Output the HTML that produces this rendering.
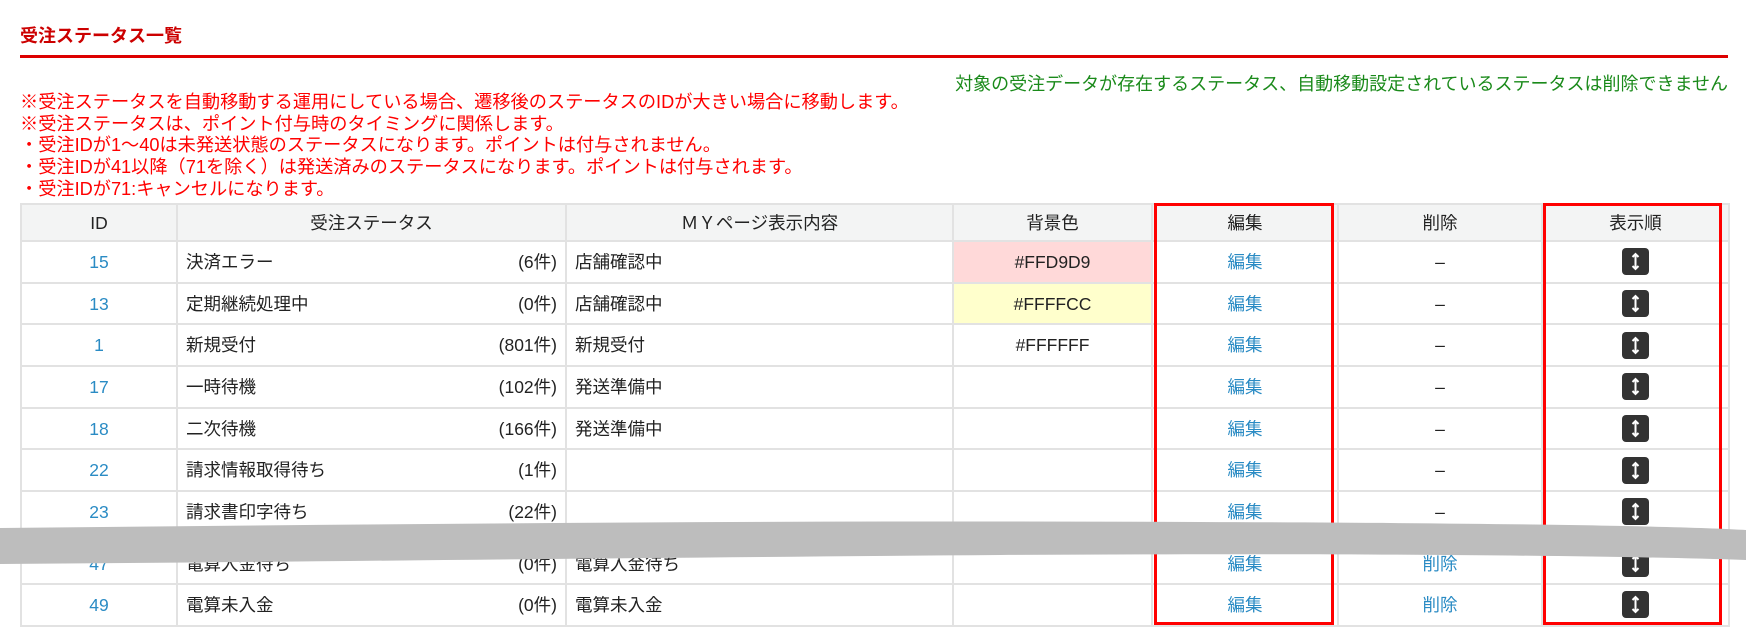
<!DOCTYPE html>
<html><head><meta charset="utf-8"><style>
body{margin:0;width:1746px;height:634px;background:#fff;position:relative;overflow:hidden;font-family:"Liberation Sans","Noto Sans CJK JP",sans-serif;}
.t{position:absolute;left:20px;top:22px;font-size:18px;font-weight:bold;color:#c00;}
.line{position:absolute;left:20px;top:55px;width:1708px;height:3px;background:#d00;}
.g{position:absolute;right:18px;top:70px;font-size:18px;color:#1a8a1a;}
.notes{position:absolute;left:20px;top:92px;font-size:18.2px;line-height:21.7px;color:#f00;}
table{position:absolute;left:20px;border-collapse:collapse;table-layout:fixed;font-size:17.5px;color:#222;}
td,th{border:2px solid #e2e2e2;height:39.7px;padding:0 8px;white-space:nowrap;vertical-align:middle;line-height:22px;box-sizing:border-box;}
th{background:#f3f4f4;font-weight:normal;height:36px;}
.c{text-align:center;}
a{color:#2a8bc4;}
.r{float:right;}
.ic{display:inline-block;width:27px;height:27px;background:#333;border-radius:4px;vertical-align:middle;}
.ic svg{display:block;}
.box{position:absolute;border:3px solid #f00;top:203px;height:416px;}
</style></head><body>
<div class="t">受注ステータス一覧</div>
<div class="line"></div>
<div class="g">対象の受注データが存在するステータス、自動移動設定されているステータスは削除できません</div>
<div class="notes">※受注ステータスを自動移動する運用にしている場合、遷移後のステータスのIDが大きい場合に移動します。<br>※受注ステータスは、ポイント付与時のタイミングに関係します。<br>・受注IDが1～40は未発送状態のステータスになります。ポイントは付与されません。<br>・受注IDが41以降（71を除く）は発送済みのステータスになります。ポイントは付与されます。<br>・受注IDが71:キャンセルになります。</div>
<table style="top:203px;width:1708px">
<colgroup><col style="width:156px"><col style="width:389px"><col style="width:387px"><col style="width:199px"><col style="width:186px"><col style="width:204px"><col style="width:187px"></colgroup>
<tr style="height:37px"><th>ID</th><th>受注ステータス</th><th>ＭＹページ表示内容</th><th>背景色</th><th>編集</th><th>削除</th><th>表示順</th></tr>
<tr style="height:41.7px"><td class="c"><a>15</a></td><td><span class="r">(6件)</span>決済エラー</td><td>店舗確認中</td><td class="c" style="background:#FFD9D9">#FFD9D9</td><td class="c"><a>編集</a></td><td class="c">–</td><td class="c"><span class="ic"><svg width="27" height="27"><path d="M13.5 6v15M10.5 9l3-3 3 3M10.5 18l3 3 3-3" stroke="#fff" stroke-width="2" fill="none"/></svg></span></td></tr>
<tr style="height:41.7px"><td class="c"><a>13</a></td><td><span class="r">(0件)</span>定期継続処理中</td><td>店舗確認中</td><td class="c" style="background:#FFFFCC">#FFFFCC</td><td class="c"><a>編集</a></td><td class="c">–</td><td class="c"><span class="ic"><svg width="27" height="27"><path d="M13.5 6v15M10.5 9l3-3 3 3M10.5 18l3 3 3-3" stroke="#fff" stroke-width="2" fill="none"/></svg></span></td></tr>
<tr style="height:41.7px"><td class="c"><a>1</a></td><td><span class="r">(801件)</span>新規受付</td><td>新規受付</td><td class="c">#FFFFFF</td><td class="c"><a>編集</a></td><td class="c">–</td><td class="c"><span class="ic"><svg width="27" height="27"><path d="M13.5 6v15M10.5 9l3-3 3 3M10.5 18l3 3 3-3" stroke="#fff" stroke-width="2" fill="none"/></svg></span></td></tr>
<tr style="height:41.7px"><td class="c"><a>17</a></td><td><span class="r">(102件)</span>一時待機</td><td>発送準備中</td><td></td><td class="c"><a>編集</a></td><td class="c">–</td><td class="c"><span class="ic"><svg width="27" height="27"><path d="M13.5 6v15M10.5 9l3-3 3 3M10.5 18l3 3 3-3" stroke="#fff" stroke-width="2" fill="none"/></svg></span></td></tr>
<tr style="height:41.7px"><td class="c"><a>18</a></td><td><span class="r">(166件)</span>二次待機</td><td>発送準備中</td><td></td><td class="c"><a>編集</a></td><td class="c">–</td><td class="c"><span class="ic"><svg width="27" height="27"><path d="M13.5 6v15M10.5 9l3-3 3 3M10.5 18l3 3 3-3" stroke="#fff" stroke-width="2" fill="none"/></svg></span></td></tr>
<tr style="height:41.7px"><td class="c"><a>22</a></td><td><span class="r">(1件)</span>請求情報取得待ち</td><td></td><td></td><td class="c"><a>編集</a></td><td class="c">–</td><td class="c"><span class="ic"><svg width="27" height="27"><path d="M13.5 6v15M10.5 9l3-3 3 3M10.5 18l3 3 3-3" stroke="#fff" stroke-width="2" fill="none"/></svg></span></td></tr>
<tr style="height:41.7px"><td class="c"><a>23</a></td><td><span class="r">(22件)</span>請求書印字待ち</td><td></td><td></td><td class="c"><a>編集</a></td><td class="c">–</td><td class="c"><span class="ic"><svg width="27" height="27"><path d="M13.5 6v15M10.5 9l3-3 3 3M10.5 18l3 3 3-3" stroke="#fff" stroke-width="2" fill="none"/></svg></span></td></tr>
<tr style="height:51px"><td class="c" style="vertical-align:bottom;padding-bottom:8px"><a>47</a></td><td style="vertical-align:bottom;padding-bottom:8px"><span class="r">(0件)</span>電算入金待ち</td><td style="vertical-align:bottom;padding-bottom:8px">電算入金待ち</td><td></td><td class="c" style="vertical-align:bottom;padding-bottom:8px"><a>編集</a></td><td class="c" style="vertical-align:bottom;padding-bottom:8px"><a>削除</a></td><td class="c" style="vertical-align:bottom;padding-bottom:6px"><span class="ic"><svg width="27" height="27"><path d="M13.5 6v15M10.5 9l3-3 3 3M10.5 18l3 3 3-3" stroke="#fff" stroke-width="2" fill="none"/></svg></span></td></tr>
<tr style="height:41.7px"><td class="c"><a>49</a></td><td><span class="r">(0件)</span>電算未入金</td><td>電算未入金</td><td></td><td class="c"><a>編集</a></td><td class="c"><a>削除</a></td><td class="c"><span class="ic"><svg width="27" height="27"><path d="M13.5 6v15M10.5 9l3-3 3 3M10.5 18l3 3 3-3" stroke="#fff" stroke-width="2" fill="none"/></svg></span></td></tr>
</table>
<div class="box" style="left:1154px;width:174px"></div>
<div class="box" style="left:1543px;width:173px"></div>
<svg style="position:absolute;left:0;top:0" width="1746" height="634"><path d="M0 528 C400 524 800 520 1200 522 C1500 523 1680 526 1746 530 L1746 560 C1600 555 1300 553 1000 555 C600 558 300 562 0 564 Z" fill="#bdbdbd"/></svg>
</body></html>
